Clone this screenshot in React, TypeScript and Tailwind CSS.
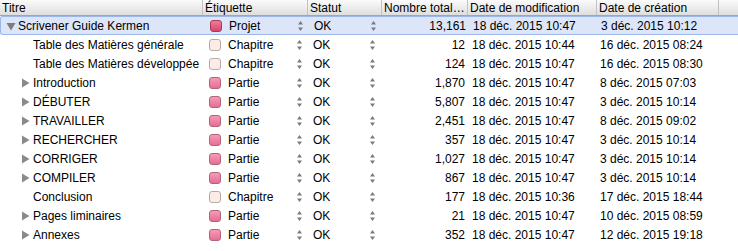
import React from 'react';

type Row = {
  title: string;
  level: 0 | 1;
  toggle: 'open' | 'closed' | null;
  label: 'Projet' | 'Chapitre' | 'Partie';
  total: string;
  modified: string;
  created: string;
};

const rows: Row[] = [
  { title: 'Scrivener Guide Kermen', level: 0, toggle: 'open', label: 'Projet', total: '13,161', modified: '18 déc. 2015 10:47', created: '3 déc. 2015 10:12' },
  { title: 'Table des Matières générale', level: 1, toggle: null, label: 'Chapitre', total: '12', modified: '18 déc. 2015 10:44', created: '16 déc. 2015 08:24' },
  { title: 'Table des Matières développée', level: 1, toggle: null, label: 'Chapitre', total: '124', modified: '18 déc. 2015 10:47', created: '16 déc. 2015 08:30' },
  { title: 'Introduction', level: 1, toggle: 'closed', label: 'Partie', total: '1,870', modified: '18 déc. 2015 10:47', created: '8 déc. 2015 07:03' },
  { title: 'DÉBUTER', level: 1, toggle: 'closed', label: 'Partie', total: '5,807', modified: '18 déc. 2015 10:47', created: '3 déc. 2015 10:14' },
  { title: 'TRAVAILLER', level: 1, toggle: 'closed', label: 'Partie', total: '2,451', modified: '18 déc. 2015 10:47', created: '8 déc. 2015 09:02' },
  { title: 'RECHERCHER', level: 1, toggle: 'closed', label: 'Partie', total: '357', modified: '18 déc. 2015 10:47', created: '3 déc. 2015 10:14' },
  { title: 'CORRIGER', level: 1, toggle: 'closed', label: 'Partie', total: '1,027', modified: '18 déc. 2015 10:47', created: '3 déc. 2015 10:14' },
  { title: 'COMPILER', level: 1, toggle: 'closed', label: 'Partie', total: '867', modified: '18 déc. 2015 10:47', created: '3 déc. 2015 10:14' },
  { title: 'Conclusion', level: 1, toggle: null, label: 'Chapitre', total: '177', modified: '18 déc. 2015 10:36', created: '17 déc. 2015 18:44' },
  { title: 'Pages liminaires', level: 1, toggle: 'closed', label: 'Partie', total: '21', modified: '18 déc. 2015 10:47', created: '10 déc. 2015 08:59' },
  { title: 'Annexes', level: 1, toggle: 'closed', label: 'Partie', total: '352', modified: '18 déc. 2015 10:47', created: '12 déc. 2015 19:18' },
];

const swatch: Record<Row['label'], string> = {
  Projet: 'bg-gradient-to-b from-[#f07a98] to-[#d94470] border-[#a83a58]',
  Chapitre: 'bg-[#fcece8] border-[#b9a9a6]',
  Partie: 'bg-gradient-to-b from-[#f59ab5] to-[#e56f95] border-[#b2647c]',
};

const cols = 'grid grid-cols-[203px_105px_74px_86px_129px_122px_1fr]';

function Stepper() {
  return (
    <svg width="7" height="12" viewBox="0 0 7 12" className="shrink-0">
      <path d="M3.5 1 L6 4.5 L1 4.5 Z" fill="#7a7a7a" />
      <path d="M3.5 11 L6 7.5 L1 7.5 Z" fill="#7a7a7a" />
    </svg>
  );
}

function Disclosure({ open }: { open: boolean }) {
  return open ? (
    <svg width="10" height="9" viewBox="0 0 10 9">
      <path d="M0.5 1 L9.5 1 L5 8.5 Z" fill="#7d7d7d" />
    </svg>
  ) : (
    <svg width="9" height="10" viewBox="0 0 9 10">
      <path d="M1 0.5 L8.5 5 L1 9.5 Z" fill="#8a8a8a" />
    </svg>
  );
}

export default function App() {
  const headers = ['Titre', 'Étiquette', 'Statut', 'Nombre total…', 'Date de modification', 'Date de création', ''];

  return (
    <div className="w-[738px] h-[251px] bg-white overflow-hidden text-[12px] text-black" style={{ fontFamily: '"Liberation Sans", Arial, sans-serif' }}>
      <div className={`${cols} h-[16px] bg-gradient-to-b from-[#fbfbfb] to-[#dedede] border-b border-[#a5a5a5]`}>
        {headers.map((h, i) => (
          <div key={i} className={`flex items-center pl-[2px] leading-none ${i < 6 ? 'border-r border-[#c2c2c2]' : ''}`}>
            {h}
          </div>
        ))}
      </div>

      {rows.map((r, i) => {
        const selected = i === 0;
        return (
          <div
            key={i}
            className={`${cols} h-[19px] items-center ${selected ? 'bg-[#dce6f8] border-y border-[#9cb8ea] rounded-l-[3px] border-l' : ''}`}
          >
            <div className={`flex items-center ${r.level === 0 ? 'pl-[5px]' : 'pl-[21px]'}`}>
              <span className="w-[12px] flex items-center">
                {r.toggle && <Disclosure open={r.toggle === 'open'} />}
              </span>
              <span className={r.level === 0 ? '' : 'pl-[0px]'}>{r.title}</span>
            </div>
            <div className="flex items-center pl-[6px] pr-[5px]">
              <span className={`w-[12px] h-[12px] rounded-[3px] border ${swatch[r.label]}`} />
              <span className="ml-[7px] flex-1">{r.label}</span>
              <Stepper />
            </div>
            <div className="flex items-center pl-[5px] pr-[6px]">
              <span className="flex-1">OK</span>
              <Stepper />
            </div>
            <div className="text-right pr-[3px]">{r.total}</div>
            <div className="pl-[4px]">{r.modified}</div>
            <div className="pl-[3px]">{r.created}</div>
            <div />
          </div>
        );
      })}
    </div>
  );
}
